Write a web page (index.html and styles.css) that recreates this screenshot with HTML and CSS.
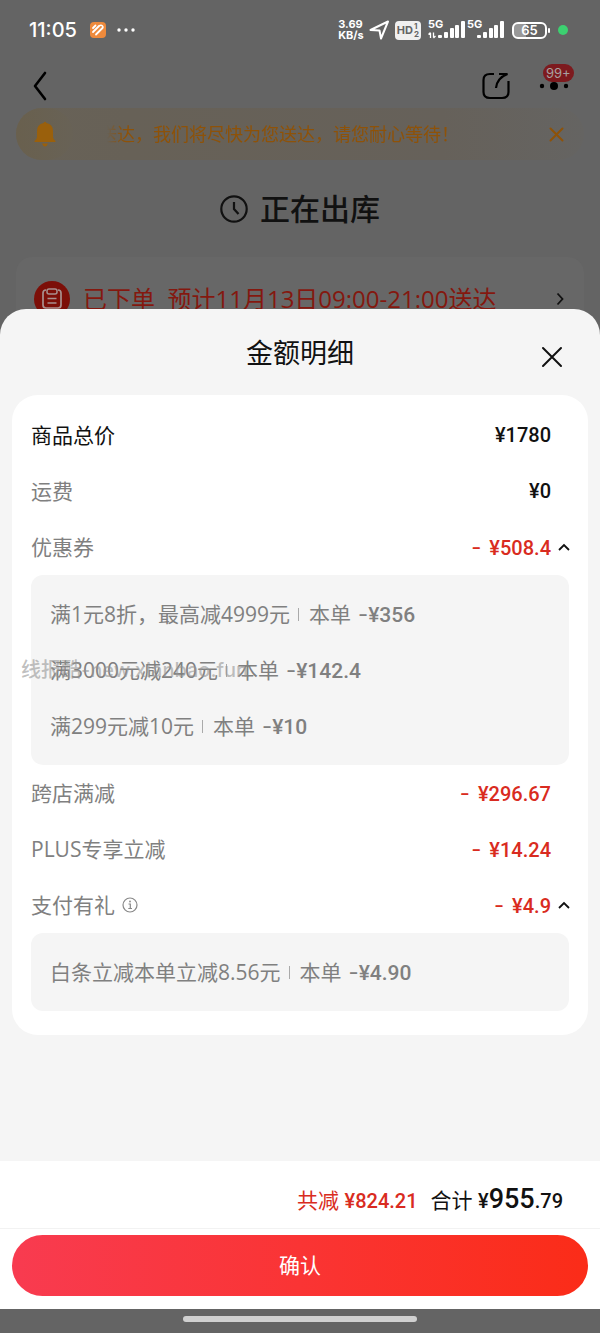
FILE: index.html
```html
<!DOCTYPE html>
<html lang="zh-CN">
<head>
    <meta charset="UTF-8">
    <meta name="viewport" content="width=device-width, initial-scale=1.0">
    <title>金额明细</title>
    <link rel="stylesheet" href="styles.css">
</head>
<body>
    <div class="order">
        <div class="status-bar">
            <span class="time">11:05</span>
            <svg class="app-icon" width="16" height="16" viewBox="0 0 16 16">
                <rect width="16" height="16" rx="4" fill="#ee8a3c"/>
                <path d="M3 6 L5.500 3.500 M3 10 L9 4 M6 12.500 L12.500 6" fill="none" stroke="#fff" stroke-width="1.800" stroke-linecap="round"/>
                <path d="M9 4 Q11 2.500 12.500 4 Q13.500 5 12.500 6" fill="none" stroke="#fff" stroke-width="1.500"/>
            </svg>
            <svg width="18" height="4" viewBox="0 0 18 4" fill="#fff">
                <circle cx="2" cy="2" r="1.700"/><circle cx="9" cy="2" r="1.700"/><circle cx="16" cy="2" r="1.700"/>
            </svg>
            <div class="status-right">
                <span class="speed"><span>3.69</span><span>KB/s</span></span>
                <svg width="21" height="20" viewBox="0 0 21 20">
                    <path d="M1.500 10 L19 1.500 L12 18.500 L10.500 10.500 Z" fill="none" stroke="#fff" stroke-width="2" stroke-linejoin="round"/>
                </svg>
                <span class="hd">HD<span class="hd-sim"><i>1</i><i>2</i></span></span>
                <span class="signal">
                    <span class="net">5G</span>
                    <svg width="37" height="18" viewBox="0 0 37 18" fill="#fff">
                        <path d="M2.500 17 V12 M0.500 13.500 L2.500 11.500 M5.500 11.500 V16.500 M7.500 15 L5.500 17" stroke="#fff" stroke-width="1.300" fill="none"/>
                        <rect x="10" y="14" width="4" height="3" rx="1"/>
                        <rect x="16" y="11" width="4" height="6" rx="1"/>
                        <rect x="22" y="7" width="4" height="10" rx="1"/>
                        <rect x="27" y="4" width="4" height="13" rx="1"/>
                        <rect x="33" y="0" width="4" height="17" rx="1"/>
                    </svg>
                </span>
                <span class="signal">
                    <span class="net">5G</span>
                    <svg width="37" height="18" viewBox="0 0 37 18" fill="#fff">
                        <rect x="10" y="14" width="4" height="3" rx="1"/>
                        <rect x="16" y="11" width="4" height="6" rx="1"/>
                        <rect x="22" y="7" width="4" height="10" rx="1"/>
                        <rect x="27" y="4" width="4" height="13" rx="1"/>
                        <rect x="33" y="0" width="4" height="17" rx="1"/>
                    </svg>
                </span>
                <span class="battery">65</span>
                <span class="dot"></span>
            </div>
        </div>

        <header class="nav">
            <a href="#" aria-label="返回">
                <svg width="14" height="30" viewBox="0 0 14 30">
                    <path d="M12 2 L2 15 L12 28" fill="none" stroke="#000" stroke-width="2.600" stroke-linecap="round" stroke-linejoin="round"/>
                </svg>
            </a>
            <div class="nav-actions">
                <button class="icon-button" aria-label="分享">
                    <svg width="28" height="28" viewBox="0 0 28 28">
                        <path d="M12 2 H8 Q1.500 2 1.500 8 V20 Q1.500 26 8 26 H20 Q26.500 26 26.500 20 V9 M17 2 H25.500 Q15 6 14 16" fill="none" stroke="#000" stroke-width="2.200"/>
                    </svg>
                </button>
                <button class="icon-button more" aria-label="更多">
                    <svg width="30" height="8" viewBox="0 0 30 8">
                        <circle cx="3" cy="4" r="2.200"/><circle cx="15" cy="4" r="4"/><circle cx="27" cy="4" r="2.200"/>
                    </svg>
                    <span class="badge">99+</span>
                </button>
            </div>
        </header>

        <div class="notice">
            <span class="bell">
                <svg width="22" height="26" viewBox="0 0 22 26" fill="#9a600c">
                    <path d="M9.500 2 Q11 -0.500 12.500 2 Q19 3.500 19 10 V16 Q19 18 21.500 20 V21 H0.500 V20 Q3 18 3 16 V10 Q3 3.500 9.500 2 Z"/>
                    <path d="M8 22.500 H14 Q13 25.500 11 25.500 Q9 25.500 8 22.500 Z"/>
                </svg>
            </span>
            <span class="notice-text">送达，我们将尽快为您送达，请您耐心等待！</span>
            <button class="icon-button" aria-label="关闭通知">
                <svg width="15" height="15" viewBox="0 0 15 15">
                    <path d="M1.500 1.500 L13.500 13.500 M13.500 1.500 L1.500 13.500" stroke="#8e5208" stroke-width="2" stroke-linecap="round"/>
                </svg>
            </button>
        </div>

        <h1 class="order-state">
            <svg width="28" height="28" viewBox="0 0 28 28">
                <circle cx="14" cy="14" r="12.700" fill="none" stroke="#111" stroke-width="2.200"/>
                <path d="M14 7 V14 L18.500 19" fill="none" stroke="#111" stroke-width="2.200"/>
            </svg>
            正在出库
        </h1>

        <div class="progress">
            <svg width="36" height="36" viewBox="0 0 36 36">
                <circle cx="18" cy="18" r="18" fill="#7c0f08"/>
                <path d="M12 9 Q9 9 9 12 V24 Q9 27 12 27 H24 Q27 27 27 24 V12 Q27 9 24 9" fill="none" stroke="#a8908e" stroke-width="1.700"/>
                <rect x="13" y="8" width="10" height="5" rx="2" fill="none" stroke="#a8908e" stroke-width="1.500"/>
                <path d="M13.500 17.500 H22.500 M13.500 22 H22.500" stroke="#a8908e" stroke-width="1.700"/>
            </svg>
            <span class="progress-text">已下单&nbsp; 预计11月13日09:00-21:00送达</span>
            <svg width="8" height="14" viewBox="0 0 8 14">
                <path d="M1.500 1.500 L6.500 7 L1.500 12.500" fill="none" stroke="#111" stroke-width="1.800"/>
            </svg>
        </div>
    </div>

    <main class="sheet">
        <div class="sheet-header">
            <h2>金额明细</h2>
            <button class="icon-button sheet-close" aria-label="关闭">
                <svg width="22" height="22" viewBox="0 0 22 22">
                    <path d="M2 2 L20 20 M20 2 L2 20" stroke="#111" stroke-width="2" stroke-linecap="round"/>
                </svg>
            </button>
        </div>

        <div class="card">
            <div class="row strong"><span>商品总价</span><span class="price">¥1780</span></div>
            <div class="row"><span>运费</span><span class="price">¥0</span></div>
            <div class="row">
                <span>优惠券</span>
                <span class="price minus"><span class="dash">-</span>¥508.4</span>
                <button class="icon-button toggle" aria-label="收起优惠券">
                    <svg width="12" height="8" viewBox="0 0 12 8"><path d="M1 7 L6 2 L11 7" fill="none" stroke="#111" stroke-width="1.800"/></svg>
                </button>
            </div>
            <ul class="detail">
                <li>满1元8折，最高减4999元<i class="bar"></i>本单<span class="cut"><span class="dash">-</span>¥356</span></li>
                <li>满3000元减240元<i class="bar"></i>本单<span class="cut"><span class="dash">-</span>¥142.4</span>
                    <span class="watermark">线报酷-new.xianbao.fun</span></li>
                <li>满299元减10元<i class="bar"></i>本单<span class="cut"><span class="dash">-</span>¥10</span></li>
            </ul>
            <div class="row"><span>跨店满减</span><span class="price minus"><span class="dash">-</span>¥296.67</span></div>
            <div class="row"><span>PLUS专享立减</span><span class="price minus"><span class="dash">-</span>¥14.24</span></div>
            <div class="row">
                <span>支付有礼</span>
                <button class="icon-button info" aria-label="说明">
                    <svg width="16" height="16" viewBox="0 0 16 16">
                        <circle cx="8" cy="8" r="7" fill="none" stroke="#888" stroke-width="1.200"/>
                        <path d="M6.500 7 H8.300 V11.500 M6.300 11.500 H10" fill="none" stroke="#888" stroke-width="1.200"/>
                        <circle cx="8" cy="4.500" r="0.900" fill="#888"/>
                    </svg>
                </button>
                <span class="price minus"><span class="dash">-</span>¥4.9</span>
                <button class="icon-button toggle" aria-label="收起支付有礼">
                    <svg width="12" height="8" viewBox="0 0 12 8"><path d="M1 7 L6 2 L11 7" fill="none" stroke="#111" stroke-width="1.800"/></svg>
                </button>
            </div>
            <ul class="detail">
                <li>白条立减本单立减8.56元<i class="bar"></i>本单<span class="cut"><span class="dash">-</span>¥4.90</span></li>
            </ul>
        </div>
    </main>

    <footer class="footer">
        <div class="totals">
            <span class="saved">共减 <b>¥824.21</b></span>
            <span class="total">合计 <b>¥<span class="big">955</span>.79</b></span>
        </div>
        <div class="confirm-wrap">
            <button class="confirm">确认</button>
        </div>
    </footer>
    <div class="home-bar"><span></span></div>
</body>
</html>
```

FILE: styles.css
```css
* {
    box-sizing: border-box;
}

body {
    font-family: "Open Sans", "Noto Sans CJK SC", sans-serif;
    font-size: 21px;
    font-weight: 400;
    line-height: 28px;
    margin: 0;
    min-height: 100vh;
    display: flex;
    flex-direction: column;
    background-color: #646464;
    color: #111;
}

svg {
    display: block;
    flex: none;
}

h1, h2, ul {
    margin: 0;
    padding: 0;
    list-style: none;
}

i {
    font-style: normal;
}

.icon-button {
    display: block;
    background: none;
    border: none;
    padding: 0;
    cursor: pointer;
}

/* dimmed order page */
.status-bar {
    display: flex;
    align-items: center;
    height: 60px;
    padding: 0 32px 0 29px;
    color: #fff;
}

.time {
    font-family: Inter, sans-serif;
    font-size: 20px;
    font-weight: 500;
}

.app-icon {
    margin: 0 11px 0 13px;
}

.status-right {
    display: flex;
    align-items: center;
    gap: 5px;
    margin-left: auto;
    font-family: Inter, sans-serif;
    font-weight: 700;
}

.speed {
    display: flex;
    flex-direction: column;
    font-size: 11px;
    line-height: 11px;
}

.hd {
    display: flex;
    align-items: center;
    gap: 1px;
    height: 19px;
    padding: 0 2px;
    border-radius: 4px;
    background-color: #f0f0f0;
    color: #646464;
    font-size: 11px;
}

.hd-sim {
    display: flex;
    flex-direction: column;
    font-size: 8px;
    line-height: 8px;
}

.signal {
    position: relative;
    margin-left: 2px;
}

.signal + .signal {
    margin-left: -3px;
}

.net {
    position: absolute;
    left: 0;
    top: -3px;
    font-size: 11px;
    line-height: 12px;
}

.battery {
    position: relative;
    width: 35px;
    height: 17px;
    margin: 0 6px 0 3px;
    border: 2px solid #fff;
    border-radius: 6px;
    background: linear-gradient(90deg, #999 40%, #646464 40%);
    font-size: 13px;
    font-weight: 600;
    line-height: 13px;
    text-align: center;
}

.battery::after {
    content: "";
    position: absolute;
    right: -5px;
    top: 4px;
    width: 2px;
    height: 5px;
    border-radius: 1px;
    background-color: #fff;
}

.dot {
    width: 10px;
    height: 10px;
    border-radius: 50%;
    background-color: #3cd070;
}

.nav {
    display: flex;
    align-items: center;
    justify-content: space-between;
    height: 48px;
    padding: 4px 31px 0 33px;
}

.nav-actions {
    display: flex;
    align-items: center;
    gap: 29px;
}

.more {
    position: relative;
}

.badge {
    position: absolute;
    left: 4px;
    bottom: 8px;
    padding: 0 3px;
    border-radius: 9px;
    background-color: #7d1a1e;
    color: #a8a0a0;
    font-family: Inter, sans-serif;
    font-size: 13px;
    line-height: 18px;
}

.more svg {
    position: relative;
    z-index: 1;
}

.notice {
    display: flex;
    align-items: center;
    height: 52px;
    margin: 0 16px;
    padding-right: 20px;
    border-radius: 26px;
    background: linear-gradient(90deg, #686257, #676157 20%, #66615a 75%, #656462);
    color: #8e5208;
    font-size: 18px;
}

.bell {
    display: flex;
    align-items: center;
    justify-content: center;
    width: 57px;
    height: 52px;
    border-radius: 26px;
    background: linear-gradient(90deg, #69604e, #686256);
}

/* scrolling message, faded at its left edge */
.notice-text {
    flex: 1;
    margin-left: 26px;
    white-space: nowrap;
    mask-image: linear-gradient(90deg, transparent 8px, #000 24px);
}

.order-state {
    display: flex;
    align-items: center;
    justify-content: center;
    gap: 12px;
    height: 97px;
    font-size: 30px;
    font-weight: 500;
}

.progress {
    display: flex;
    align-items: center;
    height: 84px;
    margin: 0 16px;
    padding: 0 20px 0 18px;
    border-radius: 16px 16px 0 0;
    background-color: #676767;
    color: #84180f;
    font-size: 24px;
}

.progress-text {
    flex: 1;
    margin-left: 13px;
    white-space: nowrap;
}

/* bottom sheet */
.sheet {
    flex: 1;
    position: relative;
    margin-top: -32px;
    padding: 0 12px 24px;
    border-radius: 26px 26px 0 0;
    background-color: #f5f5f5;
}

.sheet-header {
    position: relative;
    display: flex;
    align-items: center;
    justify-content: center;
    height: 86px;
    padding-top: 2px;
}

.sheet-header h2 {
    font-size: 27px;
    font-weight: 400;
}

.sheet-close {
    position: absolute;
    right: 25px;
    top: 37px;
}

.card {
    padding: 12px 19px 24px;
    border-radius: 26px;
    background-color: #fff;
}

.row {
    display: flex;
    align-items: center;
    height: 56px;
    padding-right: 18px;
    color: #808080;
}

.row.strong {
    color: #111;
}

.price {
    margin-left: auto;
    color: #111;
    font-family: Roboto, sans-serif;
    font-size: 20px;
    font-weight: 500;
}

.minus {
    color: #d92b20;
}

.minus .dash {
    margin-right: 8px;
}

.dash {
    font-family: Inter, sans-serif;
    font-size: 22px;
    font-weight: 400;
}

.toggle {
    margin-left: 7px;
    margin-right: -19px;
}

.info {
    margin-left: 7px;
}

.detail {
    padding: 11px 19px;
    border-radius: 12px;
    background-color: #f5f5f5;
    color: #808080;
}

.detail li {
    position: relative;
    display: flex;
    align-items: center;
    height: 56px;
    white-space: nowrap;
}

.bar {
    width: 1px;
    height: 13px;
    margin: 0 10px 0 8px;
    background-color: #aaa;
}

.cut {
    margin-left: 7px;
    font-family: Roboto, sans-serif;
    font-weight: 500;
}

.watermark {
    position: absolute;
    left: -29px;
    color: rgba(150, 150, 150, 0.6);
    font-family: Inter, "Noto Sans CJK SC", sans-serif;
    font-size: 20px;
    font-weight: 500;
}

/* totals and confirm */
.footer {
    background-color: #fff;
}

.totals {
    display: flex;
    align-items: center;
    justify-content: flex-end;
    gap: 13px;
    height: 68px;
    padding: 11px 37px 0 0;
    border-bottom: 1px solid #f2f2f2;
}

.totals b {
    font-family: Roboto, sans-serif;
    font-size: 20px;
    font-weight: 500;
}

.totals .big {
    font-size: 27px;
}

.saved {
    color: #d92b20;
}

.confirm-wrap {
    padding: 6px 12px 13px;
}

.confirm {
    display: block;
    width: 100%;
    height: 61px;
    border: none;
    border-radius: 31px;
    background: linear-gradient(90deg, #f83b50, #fa3434 50%, #fb2c18);
    color: #fff;
    font-family: inherit;
    font-size: 21px;
    line-height: 28px;
    padding: 0 0 2px;
    cursor: pointer;
}

.home-bar {
    display: flex;
    justify-content: center;
    height: 24px;
    padding-top: 7px;
}

.home-bar span {
    width: 39%;
    height: 6px;
    border-radius: 3px;
    background-color: #d0d0d0;
}
```
